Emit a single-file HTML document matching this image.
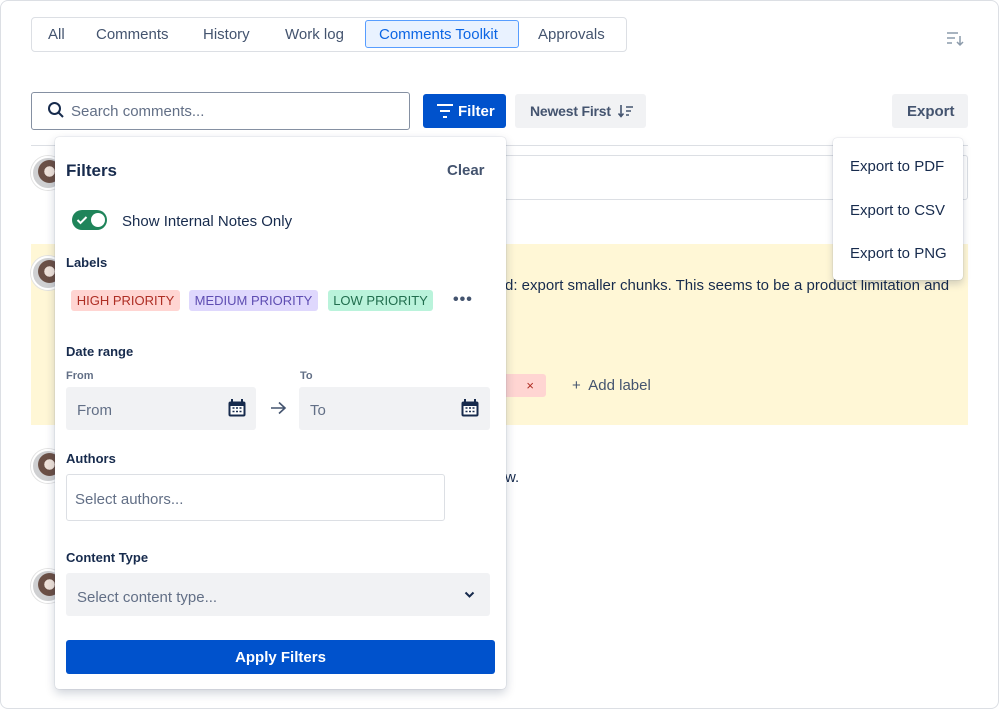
<!DOCTYPE html>
<html><head><meta charset="utf-8"><style>
*{box-sizing:border-box;margin:0;padding:0}
body{width:999px;height:709px;background:#fff;font-family:"Liberation Sans",sans-serif;color:#172b4d;position:relative;overflow:hidden}
.a{position:absolute}
.frame{left:0;top:0;width:999px;height:709px;border:1px solid #dcdfe4;border-radius:8px}
.t{font-size:15px;color:#44546f;top:26px}
.av{width:34px;height:34px;border-radius:50%;background:radial-gradient(ellipse at 55% 45%,#efe2da 0 22%,#6b5046 23% 48%,#cfd0d2 50%);border:2px solid #fff;box-shadow:0 0 0 1px #e2e2e2}
.lbl{font-size:13px;font-weight:bold;color:#172b4d}
.sm{font-size:11px;color:#626f86;font-weight:bold}
.chip{top:290px;height:21px;border-radius:3px;font-size:13px;line-height:21px;text-align:center}
.inp{background:#f1f2f4;border-radius:3px}
.ph{font-size:15px;color:#626f86}
</style></head><body>
<div class="a frame"></div>
<div class="a" style="left:31px;top:17px;width:596px;height:35px;border:1px solid #dcdfe4;border-radius:4px"></div>
<div class="a t" style="left:48px">All</div>
<div class="a t" style="left:96px">Comments</div>
<div class="a t" style="left:203px">History</div>
<div class="a t" style="left:285px">Work log</div>
<div class="a" style="left:365px;top:20px;width:154px;height:28px;background:#e9f2ff;border:1px solid #579dff;border-radius:3px"></div>
<div class="a t" style="left:379px;color:#0c66e4">Comments Toolkit</div>
<div class="a t" style="left:538px">Approvals</div>
<svg class="a" style="left:946px;top:31px" width="18" height="16" viewBox="0 0 18 16"><path d="M1 2h11M1 7h8M1 12h5M14 5v9M11 11l3 3 3-3" stroke="#8c9bab" stroke-width="1.5" fill="none"/></svg>
<div class="a" style="left:31px;top:92px;width:379px;height:38px;border:1px solid #8590a2;border-radius:3px"></div>
<svg class="a" style="left:47px;top:101px" width="18" height="18" viewBox="0 0 18 18"><circle cx="7.5" cy="7.5" r="5.5" stroke="#172b4d" stroke-width="2" fill="none"/><path d="M11.5 11.5l4.5 4.5" stroke="#172b4d" stroke-width="2"/></svg>
<div class="a ph" style="left:71px;top:103px">Search comments...</div>
<div class="a" style="left:423px;top:94px;width:83px;height:34px;background:#0052cc;border-radius:3px"></div>
<svg class="a" style="left:436px;top:103px" width="18" height="16" viewBox="0 0 18 16"><path d="M1 2h16M4 8h10M7 14h4" stroke="#fff" stroke-width="2"/></svg>
<div class="a" style="left:458px;top:103px;color:#fff;font-weight:bold;font-size:15px">Filter</div>
<div class="a" style="left:515px;top:94px;width:131px;height:34px;background:#f1f2f4;border-radius:3px"></div>
<div class="a" style="left:530px;top:103px;color:#44546f;font-weight:bold;font-size:14px;letter-spacing:-0.2px">Newest First</div>
<svg class="a" style="left:618px;top:103px" width="16" height="16" viewBox="0 0 16 16"><path d="M3 2v11M0.5 10.5l2.5 3 2.5-3M8 4h7M8 8h5M8 12h3" stroke="#44546f" stroke-width="1.6" fill="none"/></svg>
<div class="a" style="left:892px;top:94px;width:76px;height:34px;background:#f1f2f4;border-radius:3px"></div>
<div class="a" style="left:907px;top:103px;color:#44546f;font-weight:bold;font-size:15px">Export</div>
<div class="a" style="left:31px;top:145px;width:937px;height:1px;background:#dcdfe4"></div>
<div class="a" style="left:490px;top:155px;width:478px;height:45px;border:1px solid #dcdfe4;border-radius:3px"></div>
<div class="a" style="left:31px;top:244px;width:937px;height:181px;background:#fff7d6"></div>
<div class="a" style="left:505px;top:277px;font-size:15px;color:#172b4d">d: export smaller chunks. This seems to be a product limitation and</div>
<div class="a" style="left:490px;top:374px;width:56px;height:23px;background:#ffd5d2;border-radius:3px;color:#ae2e24;font-size:13px;line-height:23px;text-align:right;padding-right:12px">×</div>
<div class="a" style="left:572px;top:377px;font-size:15px;color:#44546f">+&nbsp; Add label</div>
<div class="a" style="left:505px;top:469px;font-size:15px">w.</div>
<div class="a av" style="left:31px;top:156px"></div>
<div class="a av" style="left:31px;top:256px"></div>
<div class="a av" style="left:31px;top:449px"></div>
<div class="a av" style="left:31px;top:569px"></div>
<div class="a" style="left:55px;top:137px;width:451px;height:552px;background:#fff;border-radius:4px;box-shadow:0 4px 10px rgba(9,30,66,.2),0 0 1px rgba(9,30,66,.3)"></div>
<div class="a" style="left:66px;top:161px;font-size:17px;font-weight:bold">Filters</div>
<div class="a" style="left:447px;top:162px;font-size:15px;color:#44546f;font-weight:bold">Clear</div>
<div class="a" style="left:72px;top:210px;width:35px;height:20px;background:#1f845a;border-radius:10px"></div>
<div class="a" style="left:91px;top:213px;width:14px;height:14px;background:#fff;border-radius:50%"></div>
<svg class="a" style="left:76px;top:214px" width="12" height="12" viewBox="0 0 12 12"><path d="M1.5 6l3 3 6-6" stroke="#fff" stroke-width="2" fill="none"/></svg>
<div class="a" style="left:122px;top:213px;font-size:15px;color:#172b4d">Show Internal Notes Only</div>
<div class="a lbl" style="left:66px;top:255px">Labels</div>
<div class="a chip" style="left:71px;width:109px;background:#ffd5d2;color:#ae2e24">HIGH PRIORITY</div>
<div class="a chip" style="left:189px;width:129px;background:#dfd8fd;color:#5e4db2">MEDIUM PRIORITY</div>
<div class="a chip" style="left:328px;width:105px;background:#baf3db;color:#216e4e">LOW PRIORITY</div>
<div class="a" style="left:453px;top:291px;font-size:16px;font-weight:bold;color:#44546f;letter-spacing:1px">•••</div>
<div class="a lbl" style="left:66px;top:344px">Date range</div>
<div class="a sm" style="left:66px;top:370px">From</div>
<div class="a sm" style="left:300px;top:370px">To</div>
<div class="a inp" style="left:66px;top:387px;width:190px;height:43px"></div>
<div class="a ph" style="left:77px;top:402px">From</div>
<div class="a inp" style="left:299px;top:387px;width:191px;height:43px"></div>
<div class="a ph" style="left:310px;top:402px">To</div>
<svg class="a" style="left:227px;top:398px" width="20" height="20" viewBox="0 0 20 20"><rect x="1.5" y="3.5" width="17" height="15" rx="2" fill="#172b4d"/><rect x="3.5" y="8" width="13" height="8.5" fill="#fff"/><path d="M5 1v4M15 1v4" stroke="#172b4d" stroke-width="2"/><path d="M5.5 10h2M9 10h2M12.5 10h2M5.5 13.5h2M9 13.5h2M12.5 13.5h2" stroke="#172b4d" stroke-width="1.6"/></svg>
<svg class="a" style="left:460px;top:398px" width="20" height="20" viewBox="0 0 20 20"><rect x="1.5" y="3.5" width="17" height="15" rx="2" fill="#172b4d"/><rect x="3.5" y="8" width="13" height="8.5" fill="#fff"/><path d="M5 1v4M15 1v4" stroke="#172b4d" stroke-width="2"/><path d="M5.5 10h2M9 10h2M12.5 10h2M5.5 13.5h2M9 13.5h2M12.5 13.5h2" stroke="#172b4d" stroke-width="1.6"/></svg>
<svg class="a" style="left:270px;top:401px" width="17" height="14" viewBox="0 0 17 14"><path d="M1 7h14M9 1.5l6 5.5-6 5.5" stroke="#44546f" stroke-width="1.6" fill="none"/></svg>
<div class="a lbl" style="left:66px;top:451px">Authors</div>
<div class="a" style="left:66px;top:474px;width:379px;height:47px;border:1.5px solid #dcdfe4;border-radius:3px"></div>
<div class="a ph" style="left:75px;top:491px">Select authors...</div>
<div class="a lbl" style="left:66px;top:550px">Content Type</div>
<div class="a inp" style="left:66px;top:573px;width:424px;height:43px"></div>
<div class="a ph" style="left:77px;top:589px">Select content type...</div>
<svg class="a" style="left:464px;top:591px" width="11" height="8" viewBox="0 0 11 8"><path d="M1.5 1.5l4 4 4-4" stroke="#172b4d" stroke-width="2" fill="none"/></svg>
<div class="a" style="left:66px;top:640px;width:429px;height:34px;background:#0052cc;border-radius:3px;color:#fff;font-weight:bold;font-size:15px;text-align:center;line-height:35px">Apply Filters</div>
<div class="a" style="left:833px;top:138px;width:130px;height:142px;background:#fff;border-radius:4px;box-shadow:0 4px 8px rgba(9,30,66,.18),0 0 1px rgba(9,30,66,.3)"></div>
<div class="a" style="left:850px;top:158px;font-size:15px;color:#172b4d">Export to PDF</div>
<div class="a" style="left:850px;top:202px;font-size:15px;color:#172b4d">Export to CSV</div>
<div class="a" style="left:850px;top:245px;font-size:15px;color:#172b4d">Export to PNG</div>
</body></html>
